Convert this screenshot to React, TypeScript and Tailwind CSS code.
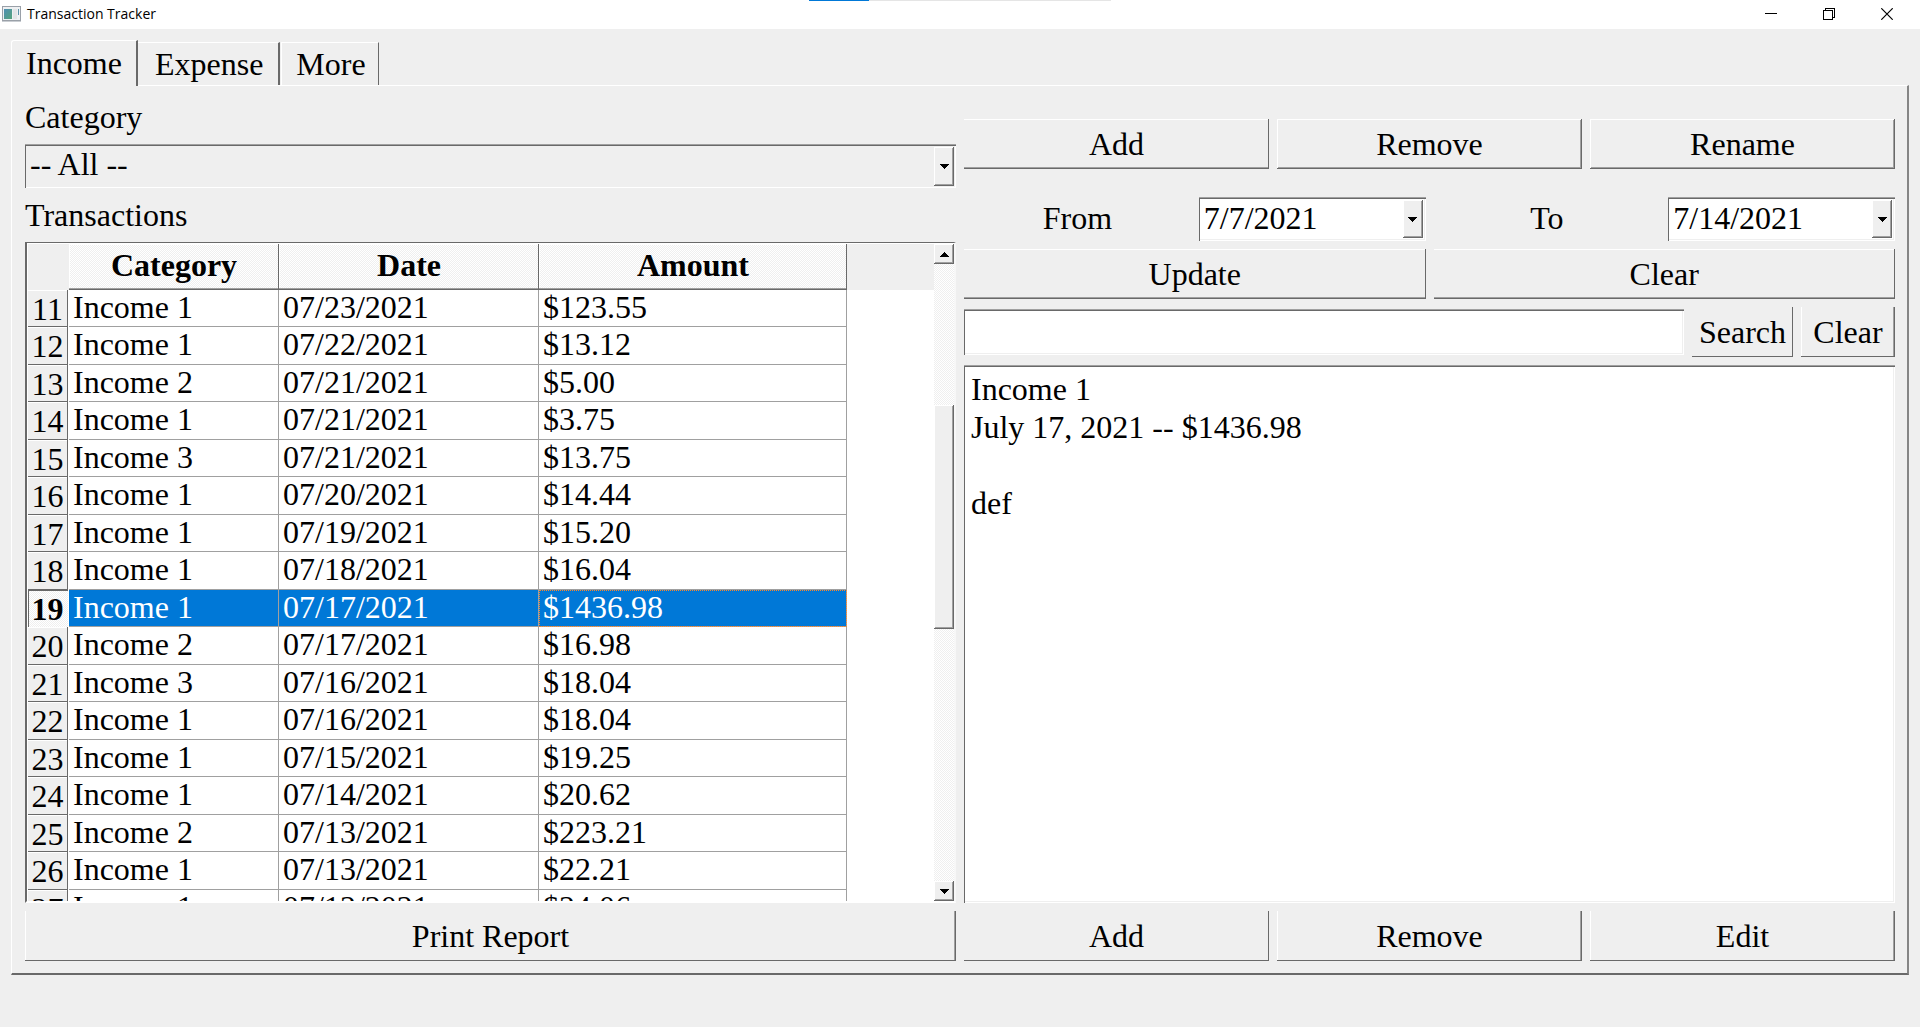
import React, { useState } from "react";
import clsx from "clsx";

const RAISED =
  "shadow-[inset_-1px_-1px_#696969,inset_1px_1px_#fff,inset_-2px_-2px_#a0a0a0]";
const RAISED_NO_LEFT =
  "shadow-[inset_-1px_-1px_#696969,inset_0_1px_#fff,inset_0_-2px_#a0a0a0]";
const RAISED_NO_TOP =
  "shadow-[inset_-1px_-1px_#696969,inset_1px_0_#fff,inset_-2px_0_#a0a0a0]";
const RAISED_PLAIN = "shadow-[inset_-1px_-1px_#696969]";
const SUNKEN =
  "shadow-[inset_0_1px_#a0a0a0,inset_1px_2px_#696969,inset_-1px_-1px_#fff,inset_-2px_-2px_#efefef]";
const CHECKER =
  "bg-[repeating-conic-gradient(#fff_0_25%,#efefef_0_50%)] bg-[length:2px_2px]";

const transactions = [
  { id: 11, category: "Income 1", date: "07/23/2021", amount: "$123.55" },
  { id: 12, category: "Income 1", date: "07/22/2021", amount: "$13.12" },
  { id: 13, category: "Income 2", date: "07/21/2021", amount: "$5.00" },
  { id: 14, category: "Income 1", date: "07/21/2021", amount: "$3.75" },
  { id: 15, category: "Income 3", date: "07/21/2021", amount: "$13.75" },
  { id: 16, category: "Income 1", date: "07/20/2021", amount: "$14.44" },
  { id: 17, category: "Income 1", date: "07/19/2021", amount: "$15.20" },
  { id: 18, category: "Income 1", date: "07/18/2021", amount: "$16.04" },
  { id: 19, category: "Income 1", date: "07/17/2021", amount: "$1436.98" },
  { id: 20, category: "Income 2", date: "07/17/2021", amount: "$16.98" },
  { id: 21, category: "Income 3", date: "07/16/2021", amount: "$18.04" },
  { id: 22, category: "Income 1", date: "07/16/2021", amount: "$18.04" },
  { id: 23, category: "Income 1", date: "07/15/2021", amount: "$19.25" },
  { id: 24, category: "Income 1", date: "07/14/2021", amount: "$20.62" },
  { id: 25, category: "Income 2", date: "07/13/2021", amount: "$223.21" },
  { id: 26, category: "Income 1", date: "07/13/2021", amount: "$22.21" },
  { id: 27, category: "Income 1", date: "07/12/2021", amount: "$24.06" },
];

function Arrow({ up = false }: { up?: boolean }) {
  return (
    <svg width="9" height="5" viewBox="0 0 9 5" shapeRendering="crispEdges" aria-hidden="true">
      <path d={up ? "M4 0h1v1h1v1h1v1h1v1h1v1H0V4h1V3h1V2h1V1h1z" : "M0 0h9v1H8v1H7v1H6v1H5v1H4V4H3V3H2V2H1V1H0z"} />
    </svg>
  );
}

function PushButton({
  children,
  bevel = RAISED,
  className,
}: {
  children: React.ReactNode;
  bevel?: string;
  className?: string;
}) {
  return (
    <button type="button" className={clsx("h-[50px] leading-[36px]", bevel, className)}>
      {children}
    </button>
  );
}

function DateField({ id, value }: { id: string; value: string }) {
  return (
    <div className={clsx("flex h-11 min-w-0 bg-white p-[3px] pl-[5px]", SUNKEN)}>
      <input id={id} type="text" defaultValue={value} className="min-w-0 flex-1 bg-transparent pb-[2px] outline-none" />
      <button
        type="button"
        aria-label="Open calendar"
        className={clsx("flex w-5 items-center justify-center bg-[#efefef]", RAISED)}
      >
        <Arrow />
      </button>
    </div>
  );
}

function TitleBar() {
  return (
    <header className="relative flex h-[29px] items-center bg-white pb-px pl-[2px] pr-1">
      <svg width="19" height="16" viewBox="0 0 19 16" aria-hidden="true">
        <defs>
          <linearGradient id="pane" x1="0" y1="0" x2="1" y2="1">
            <stop offset="0" stopColor="#4f8fb4" />
            <stop offset="1" stopColor="#55a37a" />
          </linearGradient>
        </defs>
        <rect x="0.5" y="0.5" width="18" height="14" fill="#eef0f2" stroke="#9aa0a8" />
        <rect x="0" y="15" width="19" height="1" fill="#c9cdd2" />
        <rect x="2" y="3" width="8" height="10" fill="url(#pane)" />
        <rect x="11" y="3" width="4" height="10" fill="#e2e4e6" />
        <rect x="16" y="3" width="1" height="6" fill="#5d93ab" />
      </svg>
      <h1 className="ml-[6px] flex-1 font-['Open_Sans',sans-serif] text-[14px] leading-5">Transaction Tracker</h1>
      <div className="absolute left-1/2 top-0 flex h-px w-[302px] -translate-x-1/2 bg-[#e5e5e5]">
        <div className="w-[60px] bg-[#0078d7]" />
      </div>
      <button type="button" aria-label="Minimize" className="flex h-full w-[58px] items-center justify-center">
        <svg width="12" height="12" viewBox="0 0 12 12" aria-hidden="true" shapeRendering="crispEdges">
          <path d="M0 5h12v1H0z" />
        </svg>
      </button>
      <button type="button" aria-label="Restore" className="flex h-full w-[58px] items-center justify-center">
        <svg width="12" height="12" viewBox="0 0 12 12" fill="none" stroke="#000" aria-hidden="true" shapeRendering="crispEdges">
          <path d="M0.500 2.500h9v9h-9zM2.500 2.500v-2h9v9h-2" />
        </svg>
      </button>
      <button type="button" aria-label="Close" className="flex h-full w-[58px] items-center justify-center">
        <svg width="12" height="12" viewBox="0 0 12 12" fill="none" stroke="#000" strokeWidth="1.200" aria-hidden="true">
          <path d="M0.300 0.300l11.400 11.400M11.700 0.300L0.300 11.700" />
        </svg>
      </button>
    </header>
  );
}

function Tabs() {
  return (
    <div role="tablist" className="flex items-end pl-[11px]">
      <button
        role="tab"
        aria-selected="true"
        type="button"
        className="relative z-10 -mb-px h-[46px] rounded-tl-[3px] border-l border-t border-white border-r-2 border-r-[#696969] bg-[#efefef] pl-[14px] pr-[14px] pb-px leading-[36px]"
      >
        Income
      </button>
      <button
        role="tab"
        aria-selected="false"
        type="button"
        className="h-[43px] border-r-2 border-t border-t-white border-r-[#696969] pl-[17px] pr-[15px] leading-[36px]"
      >
        Expense
      </button>
      <button
        role="tab"
        aria-selected="false"
        type="button"
        className="ml-px h-[43px] border-l border-r border-t border-white border-r-[#696969] pl-[14px] pr-3 leading-[36px]"
      >
        More
      </button>
    </div>
  );
}

function TransactionTable() {
  const [selected, setSelected] = useState(19);
  const head = clsx(
    "h-[46px] pb-1 font-bold",
    CHECKER,
    "shadow-[inset_-1px_-1px_#696969,inset_0_-2px_#a0a0a0,inset_1px_1px_#fff]"
  );
  return (
    <div className="flex min-h-0 flex-1 border-b-2 border-l-2 border-r-2 border-t border-b-white border-l-[#696969] border-r-[#f7f7f7] border-t-[#696969] bg-white pl-px pt-px">
      <div className="h-0 min-h-full min-w-0 flex-1 overflow-hidden bg-[linear-gradient(#efefef_46px,#fff_46px)]">
        <table aria-labelledby="transactions-label" className="w-[819px] table-fixed border-separate border-spacing-0 leading-[34px]">
          <colgroup>
            <col className="w-[41px]" />
            <col className="w-[210px]" />
            <col className="w-[260px]" />
            <col />
          </colgroup>
          <thead>
            <tr>
              <td className="bg-[#efefef]" />
              <th scope="col" className={head}>Category</th>
              <th scope="col" className={head}>Date</th>
              <th scope="col" className={head}>Amount</th>
            </tr>
          </thead>
          <tbody>
            {transactions.map((t) => {
              const active = t.id === selected;
              return (
                <tr
                  key={t.id}
                  onClick={() => setSelected(t.id)}
                  className={clsx("h-[37px] even:h-[38px]", active && "bg-[#0078d7] text-white")}
                >
                  <th
                    scope="row"
                    className={clsx(
                      "border-r border-white p-0 pr-px pt-[2px] text-center align-top text-black",
                      active
                        ? clsx("font-bold shadow-[inset_1px_1px_#696969]", CHECKER)
                        : "bg-[#efefef] font-normal shadow-[inset_-1px_-1px_#696969,inset_0_1px_#fff]"
                    )}
                  >
                    {t.id}
                  </th>
                  <td className="border-b border-r border-[#a0a0a0] p-0 pl-1 align-top">{t.category}</td>
                  <td className="border-b border-r border-[#a0a0a0] p-0 pl-1 align-top">{t.date}</td>
                  <td
                    className={clsx(
                      "border-b border-r border-[#a0a0a0] p-0 pl-1 align-top",
                      active && "outline-1 -outline-offset-1 outline-dotted outline-[#ff8728]"
                    )}
                  >
                    {t.amount}
                  </td>
                </tr>
              );
            })}
          </tbody>
        </table>
      </div>
      <div className={clsx("flex w-5 flex-col", CHECKER)}>
        <button
          type="button"
          aria-label="Scroll up"
          className={clsx("flex h-5 items-center justify-center bg-[#efefef]", RAISED)}
        >
          <Arrow up />
        </button>
        <div className="grow-[141]" />
        <div className={clsx("grow-[223] bg-[#efefef]", RAISED)} />
        <div className="grow-[252]" />
        <button
          type="button"
          aria-label="Scroll down"
          className={clsx("flex h-5 items-center justify-center bg-[#efefef]", RAISED)}
        >
          <Arrow />
        </button>
      </div>
    </div>
  );
}

export default function App() {
  return (
    <div className="flex h-screen flex-col bg-[#efefef] font-['Liberation_Serif',serif] text-[32px] text-black">
      <TitleBar />
      <div className="flex min-h-0 flex-1 flex-col pb-[52px] pt-[11px]">
        <Tabs />
        <main className="mx-[11px] grid min-h-0 flex-1 grid-cols-2 gap-2 border-b-2 border-l border-r-2 border-t border-b-[#696969] border-l-white border-r-[#858585] border-t-white pb-3 pl-[13px] pr-3 pt-3">
          <section className="flex min-h-0 min-w-0 flex-col gap-2">
            <label htmlFor="category" className="leading-[38px]">
              Category
            </label>
            <div className={clsx("relative h-11 p-[3px]", SUNKEN)}>
              <select
                id="category"
                className="block h-[34px] w-full appearance-none bg-transparent pl-[2px] leading-[34px] outline-none"
              >
                <option>-- All --</option>
                <option>Income 1</option>
                <option>Income 2</option>
                <option>Income 3</option>
              </select>
              <span
                className={clsx(
                  "pointer-events-none absolute bottom-[2px] right-[2px] top-[3px] flex w-5 items-center justify-center bg-[#efefef]",
                  RAISED
                )}
              >
                <Arrow />
              </span>
            </div>
            <h2 id="transactions-label" className="leading-[38px]">
              Transactions
            </h2>
            <TransactionTable />
            <PushButton bevel={RAISED_NO_TOP}>Print Report</PushButton>
          </section>

          <section className="flex min-h-0 min-w-0 flex-col gap-2 pt-[21px]">
            <div className="mb-5 grid grid-cols-3 gap-2">
              <PushButton bevel={RAISED_NO_LEFT}>Add</PushButton>
              <PushButton>Remove</PushButton>
              <PushButton>Rename</PushButton>
            </div>
            <div className="grid grid-cols-4 gap-2">
              <label htmlFor="from" className="text-center leading-[42px]">
                From
              </label>
              <DateField id="from" value="7/7/2021" />
              <label htmlFor="to" className="text-center leading-[42px]">
                To
              </label>
              <DateField id="to" value="7/14/2021" />
            </div>
            <div className="grid grid-cols-2 gap-2">
              <PushButton bevel={RAISED_NO_LEFT}>Update</PushButton>
              <PushButton bevel={RAISED_NO_LEFT}>Clear</PushButton>
            </div>
            <div className="flex items-center gap-2">
              <input
                type="search"
                aria-label="Search transactions"
                className={clsx("h-[46px] min-w-0 flex-1 bg-white px-2 outline-none", SUNKEN)}
              />
              <PushButton bevel={RAISED_PLAIN} className="w-[101px]">Search</PushButton>
              <PushButton bevel={RAISED_NO_TOP} className="w-[94px]">Clear</PushButton>
            </div>
            <textarea
              aria-label="Transaction details"
              defaultValue={"Income 1\nJuly 17, 2021 -- $1436.98\n\ndef"}
              className={clsx("min-h-0 flex-1 resize-none bg-white pl-[7px] pt-[5px] leading-[38px] outline-none", SUNKEN)}
            />
            <div className="grid grid-cols-3 gap-2">
              <PushButton bevel={RAISED_PLAIN}>Add</PushButton>
              <PushButton bevel={RAISED_NO_TOP}>Remove</PushButton>
              <PushButton bevel={RAISED_NO_TOP}>Edit</PushButton>
            </div>
          </section>
        </main>
      </div>
    </div>
  );
}
